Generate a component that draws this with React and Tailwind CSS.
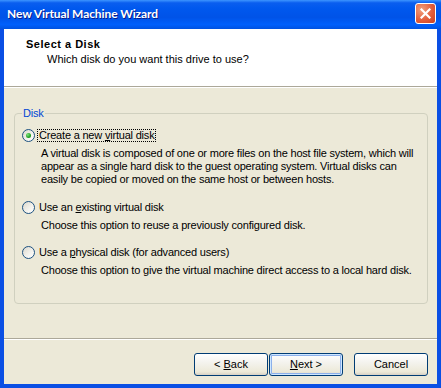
import React from "react";

function Radio({ checked }) {
  return (
    <span className="inline-flex w-[13px] h-[13px] shrink-0 rounded-full border border-[#1c5180] bg-[linear-gradient(135deg,#dcd8cc,#f4f3ee_60%,#ffffff)] items-center justify-center">
      {checked && (
        <span className="w-[5px] h-[5px] rounded-full bg-[radial-gradient(circle_at_35%_35%,#7ee37e,#21a121_60%,#128412)]" />
      )}
    </span>
  );
}

function Option({ checked, label, focused, children, className }) {
  return (
    <div className={className}>
      <div className="flex items-center h-[13px] gap-[2px]">
        <Radio checked={checked} />
        <span
          className={
            "leading-[11px] px-[1px] whitespace-nowrap " +
            (focused ? "border border-dotted border-black" : "border border-transparent")
          }
        >
          {label}
        </span>
      </div>
      <div className="ml-[19px] mt-[5px] leading-[13px] whitespace-nowrap">{children}</div>
    </div>
  );
}

function Button({ children, isDefault }) {
  return (
    <button
      className={
        "w-[74px] h-[23px] rounded-[3px] border border-[#003c74] bg-[linear-gradient(to_bottom,#ffffff,#f4f3ee_40%,#ece9d8_85%,#d6d0c5)] text-[11px] text-black flex items-center justify-center " +
        (isDefault
          ? "shadow-[inset_0_0_0_1px_#cee7ff,inset_0_0_0_2px_#8cb0eb]"
          : "")
      }
    >
      {children}
    </button>
  );
}

export default function App() {
  return (
    <div className="w-[441px] h-[388px] flex flex-col font-['Liberation_Sans',Arial,sans-serif] text-[11px] text-black select-none overflow-hidden">
      {/* Title bar */}
      <div className="h-[29px] shrink-0 flex items-center justify-between pl-[7px] pr-[5px] bg-[linear-gradient(to_bottom,#3d95ff,#0a5eef_10%,#0058ee_30%,#0053e8_60%,#0060fc_85%,#0052e0)]">
        <span className="font-['Lato',sans-serif] text-white font-bold text-[12px] tracking-[-0.1px] [text-shadow:1px_1px_0_#0a1e8c] -mt-[1px]">
          New Virtual Machine Wizard
        </span>
        <span className="w-[21px] h-[21px] -mt-[2px] rounded-[3px] border border-white bg-[radial-gradient(circle_at_30%_30%,#f0a07e,#e35e3c_55%,#c9401f)] flex items-center justify-center">
          <svg width="11" height="11" viewBox="0 0 11 11">
            <path d="M1.5 1.5 L9.5 9.5 M9.5 1.5 L1.5 9.5" stroke="white" strokeWidth="2.2" strokeLinecap="square" />
          </svg>
        </span>
      </div>

      {/* Body with frame */}
      <div className="flex-1 flex flex-col border-x-[4px] border-b-[4px] border-[#0a4fe4]">
        {/* Header */}
        <div className="h-[57px] shrink-0 bg-white pl-[22px] pt-[9px]">
          <div className="font-bold leading-[13px] tracking-[0.5px]">Select a Disk</div>
          <div className="pl-[21px] mt-[2px] leading-[13px]">Which disk do you want this drive to use?</div>
        </div>
        <div className="h-px bg-[#aca899] shrink-0" />
        <div className="h-px bg-white shrink-0" />

        {/* Content */}
        <div className="flex-1 bg-[#ece9d8] flex flex-col tracking-[-0.2px]">
          <fieldset className="mt-[19px] ml-[10px] mr-[9px] border border-[#d0d0bf] rounded-[4px] pl-[7px] pr-[6px] pb-[26px]">
            <legend className="px-[1px] ml-0 text-[#0046d5] leading-[13px]">Disk</legend>
            <Option className="mt-[9px]" checked focused label={<>Create a new <u>v</u>irtual disk</>}>
              A virtual disk is composed of one or more files on the host file system, which will
              <br />
              appear as a single hard disk to the guest operating system. Virtual disks can
              <br />
              easily be copied or moved on the same host or between hosts.
            </Option>
            <Option className="mt-[15px]" label={<>Use an <u>e</u>xisting virtual disk</>}>
              Choose this option to reuse a previously configured disk.
            </Option>
            <Option className="mt-[14px]" label={<>Use a <u>p</u>hysical disk (for advanced users)</>}>
              Choose this option to give the virtual machine direct access to a local hard disk.
            </Option>
          </fieldset>

          <div className="flex-1" />
          <div className="h-px bg-[#aca899] shrink-0" />
          <div className="h-px bg-white shrink-0" />
          <div className="h-[44px] shrink-0 flex items-start justify-end pt-[13px] pr-[9px] tracking-normal">
            <Button>&lt; <u className="ml-[3px]">B</u>ack</Button>
            <div className="w-[1px]" />
            <Button isDefault><u>N</u>ext &gt;</Button>
            <div className="w-[11px]" />
            <Button>Cancel</Button>
          </div>
        </div>
      </div>
    </div>
  );
}
